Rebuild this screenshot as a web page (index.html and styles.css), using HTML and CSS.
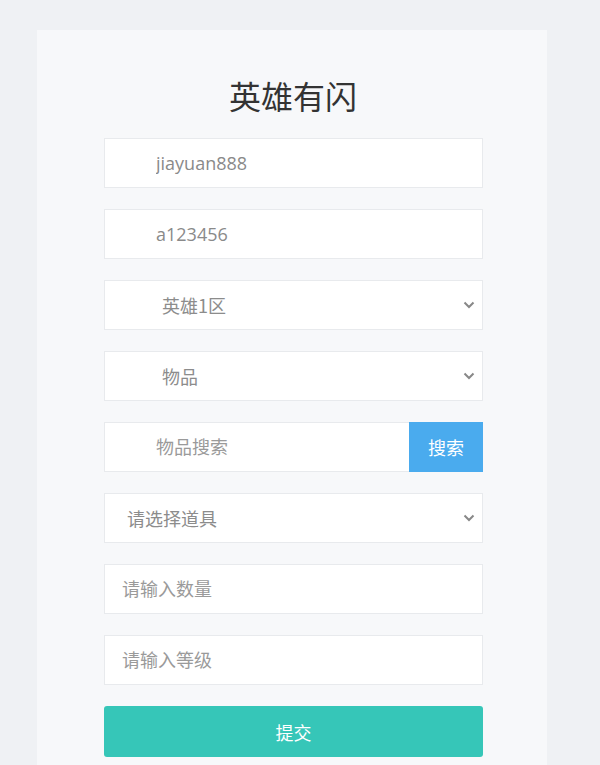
FILE: index.html
```html
<!DOCTYPE html>
<html lang="zh-CN">
<head>
<meta charset="utf-8">
<title>英雄有闪</title>
<link rel="stylesheet" href="styles.css">
</head>
<body>
<div class="card">
  <h1 class="title">英雄有闪</h1>
  <form class="form">
    <input class="field pad-wide" type="text" value="jiayuan888">
    <input class="field pad-wide" type="text" value="a123456">
    <div class="select-wrap">
      <select class="field select pad-select">
        <option>英雄1区</option>
      </select>
      <svg class="chevron" viewBox="0 0 12 8" width="12" height="8"><path d="M1.5 1.5 L6 6 L10.5 1.5" fill="none" stroke="#888" stroke-width="2"/></svg>
    </div>
    <div class="select-wrap">
      <select class="field select pad-select">
        <option>物品</option>
      </select>
      <svg class="chevron" viewBox="0 0 12 8" width="12" height="8"><path d="M1.5 1.5 L6 6 L10.5 1.5" fill="none" stroke="#888" stroke-width="2"/></svg>
    </div>
    <div class="search-row">
      <input class="field search-input pad-wide" type="text" placeholder="物品搜索">
      <button class="search-btn" type="button">搜索</button>
    </div>
    <div class="select-wrap">
      <select class="field select pad-mid">
        <option>请选择道具</option>
      </select>
      <svg class="chevron" viewBox="0 0 12 8" width="12" height="8"><path d="M1.5 1.5 L6 6 L10.5 1.5" fill="none" stroke="#888" stroke-width="2"/></svg>
    </div>
    <input class="field pad-narrow" type="text" placeholder="请输入数量">
    <input class="field pad-narrow" type="text" placeholder="请输入等级">
    <button class="submit" type="button">提交</button>
  </form>
</div>
</body>
</html>
```
FILE: styles.css
```css
html, body {
  margin: 0;
  padding: 0;
  background: #eff1f4;
  font-family: "Open Sans", "Noto Sans CJK SC", sans-serif;
  overflow: hidden;
}
.card {
  margin: 30px 0 0 37px;
  width: 510px;
  height: 735px;
  background: #f7f8fa;
  padding-top: 40px;
  box-sizing: border-box;
}
.title {
  margin: 0;
  text-align: center;
  font-family: "Noto Sans CJK SC", sans-serif;
  font-weight: 400;
  font-size: 32px;
  line-height: 50px;
  color: #333;
  padding-left: 2px;
}
.form {
  margin: 18px 0 0 67px;
  width: 379px;
  display: flex;
  flex-direction: column;
  gap: 21px;
}
.field {
  display: block;
  width: 100%;
  height: 50px;
  box-sizing: border-box;
  border: 1px solid #e8eaed;
  background: #fff;
  font-family: "Open Sans", "Noto Sans CJK SC", sans-serif;
  font-size: 18px;
  color: #8a8a8a;
  outline: none;
  margin: 0;
  border-radius: 0;
}
.field::placeholder {
  color: #9a9a9a;
}
.pad-wide { padding-left: 51px; }
.pad-select { padding-left: 57px; }
.pad-mid { padding-left: 22px; }
.pad-narrow { padding-left: 17px; }
.select-wrap {
  position: relative;
}
.select {
  appearance: none;
  -webkit-appearance: none;
  color: #8c8c8c;
  font-family: "Noto Sans CJK SC", sans-serif;
}
.chevron {
  position: absolute;
  right: 8px;
  top: 21px;
  pointer-events: none;
}
.search-row {
  display: flex;
}
.search-input {
  flex: 1;
  width: auto;
  border-right: none;
}
.search-btn {
  width: 74px;
  height: 50px;
  border: none;
  margin: 0;
  background: #4aabee;
  color: #fff;
  font-family: "Noto Sans CJK SC", sans-serif;
  font-size: 18px;
  padding: 0;
}
.submit {
  height: 51px;
  border: none;
  border-radius: 3px;
  background: #36c6b8;
  color: #fff;
  font-family: "Noto Sans CJK SC", sans-serif;
  font-size: 18px;
  padding: 0;
  margin: 0;
}
```
